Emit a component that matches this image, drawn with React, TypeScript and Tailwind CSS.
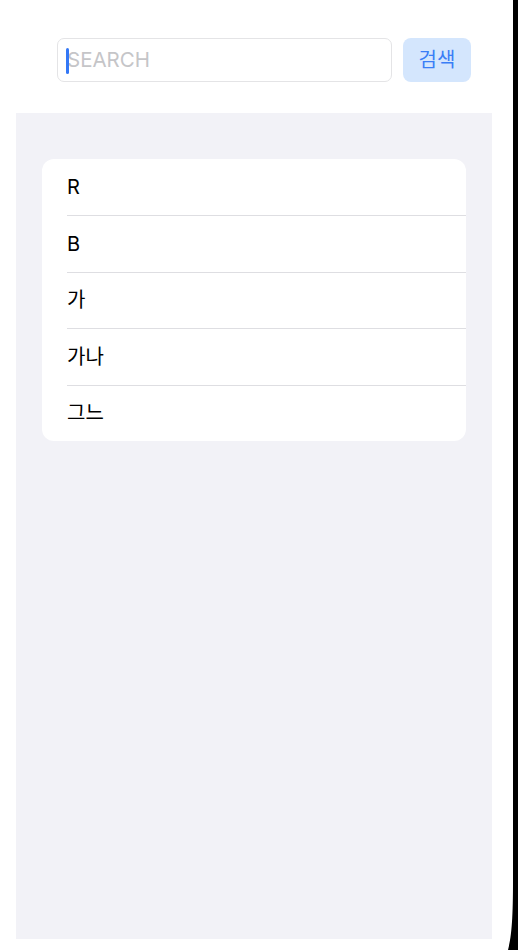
import React from "react";

const font = { fontFamily: '"Inter", "Noto Sans CJK KR", sans-serif' };

export default function App() {
  const items = ["R", "B", "가", "가나", "그느"];
  return (
    <div
      className="relative w-[518px] h-[950px] bg-white overflow-hidden"
      style={font}
    >
      <div className="flex pt-[38px] pl-[57px] gap-[11px]">
        <div className="relative w-[335px] h-[44px] rounded-[7px] border border-[#e4e4e6] bg-white flex items-center pl-[9px]">
          <span className="text-[20.5px] text-[#c5c5c8] leading-none">SEARCH</span>
          <div className="absolute left-[8px] top-[9px] w-[3px] h-[26px] rounded-full bg-[#3478f6]" />
        </div>
        <div className="w-[68px] h-[44px] rounded-[8px] bg-[#d4e6fd] flex items-center justify-center">
          <span className="text-[20px] text-[#3a7ef6] leading-none">검색</span>
        </div>
      </div>
      <div className="mt-[31px] ml-[16px] w-[476px] h-[826px] bg-[#f2f2f7] pt-[46px] pl-[26px]">
        <div className="w-[424px] bg-white rounded-[12px] overflow-hidden">
          {items.map((t, i) => (
            <div key={t} className="pl-[25px]">
              <div
                className={
                  "h-[56.4px] flex items-center text-[20px] text-black " +
                  (i > 0 ? "border-t border-[#dedee2]" : "")
                }
              >
                {t}
              </div>
            </div>
          ))}
        </div>
      </div>
      <div className="absolute right-0 top-0 w-[5px] h-[950px] bg-black" />
      <svg
        className="absolute right-0 bottom-0"
        width="12"
        height="70"
        viewBox="0 0 12 70"
      >
        <path d="M12 0 L7 0 C7 35 6 55 2 70 L12 70 Z" fill="#000" />
      </svg>
    </div>
  );
}
